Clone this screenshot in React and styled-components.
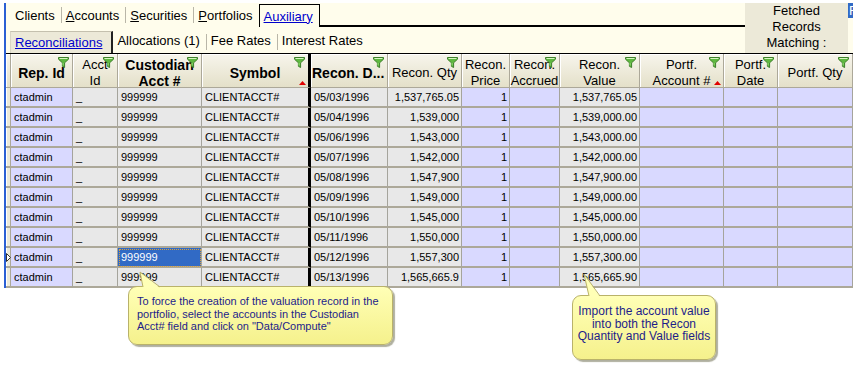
import React from 'react';
import styled, { createGlobalStyle } from 'styled-components';

const GlobalStyle = createGlobalStyle`
  html, body { margin: 0; padding: 0; background: #fff; }
  body { font-family: "Liberation Sans", Arial, sans-serif; color: #000; }
  * { box-sizing: border-box; }
`;

const COLS = '5px 62px 45px 84px 109px 77px 74px 48px 50px 80px 84px 54px 75px';

const Screen = styled.div`
  position: relative;
  width: 861px;
  height: 370px;
  overflow: hidden;
  background: #fff;
  padding-top: 3px;
`;

const Window = styled.div`
  margin-left: 4px;
  width: 849px;
  border-left: 2px solid #2b5fd4;
`;

const TopBar = styled.div`
  display: flex;
  height: 50px;
  background: #fffdec;
`;

const TabArea = styled.div`
  flex: 1;
  display: flex;
  flex-direction: column;
`;

const MainTabs = styled.div`
  display: flex;
  height: 24px;
  padding-left: 5px;
  font-size: 13px;
`;

const SubTabs = styled.div`
  display: flex;
  height: 26px;
  padding-left: 4px;
  font-size: 13px;
`;

const Tab = styled.div`
  display: flex;
  align-items: center;
  padding: 0 6px 0 4px;
  white-space: nowrap;
`;

const ActiveMainTab = styled(Tab)`
  margin-top: 1px;
  border: 1px solid #000;
  border-bottom: none;
  color: #0000cc;
  text-decoration: underline;
`;

const ActiveSubTab = styled(Tab)`
  margin-top: 4px;
  padding-right: 9px;
  background: #ece9d8;
  border-top: 1px solid #c4c0ae;
  border-left: 1px solid #d8d4c4;
  border-right: 2px solid #222;
  color: #0000cc;
  text-decoration: underline;
`;

const Sep = styled.div`
  width: 1px;
  align-self: center;
  height: ${p => p.$h || 16}px;
  margin-top: ${p => p.$top || 0}px;
  background: #b9b6a8;
`;

const Filler = styled.div`
  flex: 1;
  border-bottom: 2px solid #000;
`;

const Key = styled.span`
  text-decoration: underline;
`;

const Fetched = styled.div`
  width: 103px;
  background: #ece9d8;
  font-size: 13px;
  line-height: 16px;
  text-align: center;
`;

const Nub = styled.div`
  width: 5px;
  height: 15px;
  overflow: hidden;
  background: #316ac5;
  color: #fff;
  font-size: 13px;
  line-height: 15px;
  padding-left: 1px;
`;

const Grid = styled.div`
  border-top: 1px solid #000;
`;

const Row = styled.div`
  display: grid;
  grid-template-columns: ${COLS};
  height: ${p => p.$h}px;
`;

const HeadCell = styled.div`
  position: relative;
  display: flex;
  flex-direction: column;
  justify-content: center;
  align-items: ${p => (p.$align === 'left' ? 'flex-start' : 'center')};
  padding: 4px 1px 0;
  overflow: hidden;
  background: linear-gradient(#f7f5ec, #e4e0c9);
  border-right: ${p => (p.$thick ? '3px solid #000' : '1px solid #aca899')};
  border-bottom: 1px solid #aca899;
  box-shadow: inset 1px 1px 0 #fff;
  font-size: ${p => (p.$bold ? '14px' : '13px')};
  font-weight: ${p => (p.$bold ? 700 : 400)};
  line-height: 16px;
  white-space: nowrap;
`;

const FilterMark = styled.svg`
  position: absolute;
  top: 3px;
  right: 3px;
`;

const SortMark = styled.svg`
  position: absolute;
  bottom: 2px;
  right: 2px;
`;

const Cell = styled.div`
  height: 20px;
  padding: ${p => (p.$right ? '0 2px 0 0' : '0 0 0 3px')};
  background: ${p => (p.$selected ? '#316ac5' : p.$tone === 'lav' ? '#d9d9ff' : '#e8e8e8')};
  color: ${p => (p.$selected ? '#fff' : '#000')};
  outline: ${p => (p.$selected ? '1px dotted #d8a040' : 'none')};
  outline-offset: -2px;
  border-right: ${p => (p.$thick ? '3px solid #000' : '1px solid #a5a49c')};
  border-bottom: 2px solid #aca899;
  font-size: 11px;
  line-height: 18px;
  text-align: ${p => (p.$right ? 'right' : 'left')};
  white-space: nowrap;
  overflow: hidden;
`;

const Gutter = styled.div`
  position: relative;
  height: 20px;
  background: #ece9d8;
  border-right: 1px solid #aca899;
  border-bottom: 2px solid #aca899;
  box-shadow: inset 1px 0 0 #fff;
`;

const Pointer = styled.svg`
  position: absolute;
  left: 0;
  top: 5px;
`;

const Callout = styled.div`
  position: absolute;
  left: ${p => p.$x}px;
  top: ${p => p.$y}px;
  width: ${p => p.$w}px;
  height: ${p => p.$h}px;
  padding: ${p => p.$pad};
  background: linear-gradient(#ffffb6, #f5f18c);
  border: 1px solid #b9b26a;
  border-radius: 9px;
  box-shadow: 2px 2px 1px rgba(110, 110, 80, 0.55);
  color: #1d1d8a;
  font-size: ${p => p.$size}px;
  line-height: 12.7px;
  text-align: ${p => p.$align};
  white-space: nowrap;
`;

const Tail = styled.svg`
  position: absolute;
  left: ${p => p.$x}px;
  top: ${p => p.$y}px;
  overflow: visible;
`;

const headers = [
  { lines: ['Rep. Id'], bold: true, filter: true },
  { lines: ['Acct', 'Id'], filter: true },
  { lines: ['Custodian', 'Acct #'], bold: true, filter: true },
  { lines: ['Symbol'], bold: true, filter: true, sort: true, thick: true },
  { lines: ['Recon. D...'], bold: true, filter: true, align: 'left' },
  { lines: ['Recon. Qty'], filter: true },
  { lines: ['Recon.', 'Price'] },
  { lines: ['Recon.', 'Accrued'], filter: true },
  { lines: ['Recon.', 'Value'], filter: true },
  { lines: ['Portf.', 'Account #'], filter: true, sort: true },
  { lines: ['Portf.', 'Date'], filter: true },
  { lines: ['Portf. Qty'], filter: true },
];

const rows = [
  ['05/03/1996', '1,537,765.05', '1,537,765.05'],
  ['05/04/1996', '1,539,000', '1,539,000.00'],
  ['05/06/1996', '1,543,000', '1,543,000.00'],
  ['05/07/1996', '1,542,000', '1,542,000.00'],
  ['05/08/1996', '1,547,900', '1,547,900.00'],
  ['05/09/1996', '1,549,000', '1,549,000.00'],
  ['05/10/1996', '1,545,000', '1,545,000.00'],
  ['05/11/1996', '1,550,000', '1,550,000.00'],
  ['05/12/1996', '1,557,300', '1,557,300.00'],
  ['05/13/1996', '1,565,665.9', '1,565,665.90'],
];

function Funnel() {
  return (
    <FilterMark width="11" height="11" viewBox="0 0 11 11">
      <path d="M0.5 0.5 H10.5 V2.2 L6.6 5.8 V10.5 L4.4 9.3 V5.8 L0.5 2.2 Z" fill="#5fb840" stroke="#3d7f2a" strokeWidth="1" />
      <path d="M1.5 1.5 H9.5" stroke="#d6f5c0" strokeWidth="1" />
      <path d="M5 6 V8.5" stroke="#9be07a" strokeWidth="1" />
    </FilterMark>
  );
}

function Sort() {
  return (
    <SortMark width="7" height="4" viewBox="0 0 7 4">
      <polygon points="0,4 3.5,0 7,4" fill="#e00000" />
    </SortMark>
  );
}

function HeaderRow() {
  return (
    <Row $h={34}>
      <HeadCell />
      {headers.map((h, i) => (
        <HeadCell key={i} $bold={h.bold} $align={h.align} $thick={h.thick}>
          {h.lines.map(l => (
            <span key={l}>{l}</span>
          ))}
          {h.filter && <Funnel />}
          {h.sort && <Sort />}
        </HeadCell>
      ))}
    </Row>
  );
}

function DataRow({ date, qty, value, current }) {
  return (
    <Row $h={20}>
      <Gutter>
        {current && (
          <Pointer width="5" height="9" viewBox="0 0 5 9">
            <polygon points="0.5,0.5 4.5,4.5 0.5,8.5" fill="#fff" stroke="#333" strokeWidth="1" />
          </Pointer>
        )}
      </Gutter>
      <Cell $tone="lav">ctadmin</Cell>
      <Cell>_</Cell>
      <Cell $selected={current}>999999</Cell>
      <Cell $thick>CLIENTACCT#</Cell>
      <Cell>{date}</Cell>
      <Cell $right>{qty}</Cell>
      <Cell $tone="lav" $right>1</Cell>
      <Cell $tone="lav" />
      <Cell $right>{value}</Cell>
      <Cell $tone="lav" />
      <Cell $tone="lav" />
      <Cell $tone="lav" />
    </Row>
  );
}

export default function App() {
  return (
    <>
      <GlobalStyle />
      <Screen>
        <Window>
          <TopBar>
            <TabArea>
              <MainTabs>
                <Tab>Clients</Tab>
                <Sep />
                <Tab><Key>A</Key>ccounts</Tab>
                <Sep />
                <Tab><Key>S</Key>ecurities</Tab>
                <Sep />
                <Tab><Key>P</Key>ortfolios</Tab>
                <ActiveMainTab>Auxiliary</ActiveMainTab>
                <Filler />
              </MainTabs>
              <SubTabs>
                <ActiveSubTab>Reconciliations</ActiveSubTab>
                <Tab>Allocations (1)</Tab>
                <Sep $top={4} />
                <Tab>Fee Rates</Tab>
                <Sep $top={4} />
                <Tab>Interest Rates</Tab>
              </SubTabs>
            </TabArea>
            <Fetched>
              Fetched
              <br />
              Records
              <br />
              Matching :
            </Fetched>
            <Nub>F</Nub>
          </TopBar>
          <Grid>
            <HeaderRow />
            {rows.map((r, i) => (
              <DataRow key={r[0]} date={r[0]} qty={r[1]} value={r[2]} current={i === 8} />
            ))}
          </Grid>
        </Window>

        <Callout $x={128} $y={286} $w={265} $h={59} $pad="8px 0 0 8px" $size={11} $align="left">
          <Tail $x={9} $y={-16} width="25" height="17" viewBox="0 0 25 17">
            <polygon points="5,17 2,1 22,17" fill="#ffffb6" />
            <polyline points="5,16 2,1 22,16" fill="none" stroke="#b9b26a" strokeWidth="1" />
          </Tail>
          To force the creation of the valuation record in the
          <br />
          portfolio, select the accounts in the Custodian
          <br />
          Acct# field and click on "Data/Compute"
        </Callout>

        <Callout $x={572} $y={295} $w={144} $h={65} $pad="9px 0 0 0" $size={12} $align="center">
          <Tail $x={8} $y={-23} width="22" height="24" viewBox="0 0 22 24">
            <polygon points="8,24 3,1 19,24" fill="#ffffb6" />
            <polyline points="8,23 3,1 19,23" fill="none" stroke="#b9b26a" strokeWidth="1" />
          </Tail>
          Import the account value
          <br />
          into both the Recon
          <br />
          Quantity and Value fields
        </Callout>
      </Screen>
    </>
  );
}
